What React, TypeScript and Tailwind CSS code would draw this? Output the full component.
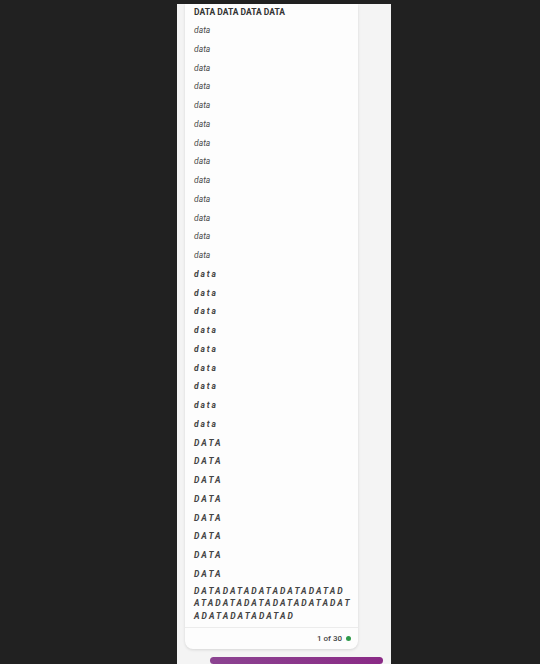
import React from 'react';

const plainRows = Array.from({ length: 13 }, (_, i) => i);
const spacedRows = Array.from({ length: 9 }, (_, i) => i);
const capsRows = Array.from({ length: 8 }, (_, i) => i);

export default function App() {
  return (
    <div
      className="h-[664px] w-[540px] overflow-hidden bg-[#212121]"
      style={{ fontFamily: 'Roboto, "Liberation Sans", sans-serif' }}
    >
      <div className="ml-[177px] mt-[4px] flex h-[660px] w-[214px] flex-col bg-[#f4f4f4]">
        {/* Message card */}
        <div className="ml-[8px] w-[173px] rounded-b-[8px] bg-[#fdfdfd] shadow-[0_1px_3px_rgba(0,0,0,0.12)]">
          <div className="px-[9px]">
            <div className="flex h-[17px] items-center text-[8.5px] font-bold text-[#333]">
              DATA DATA DATA DATA
            </div>

            {plainRows.map((i) => (
              <div key={`p${i}`} className="flex h-[18.75px] items-center text-[8.5px] italic text-[#4a4a4a]">
                data
              </div>
            ))}

            {spacedRows.map((i) => (
              <div
                key={`s${i}`}
                className="flex h-[18.75px] items-center text-[8.5px] font-bold italic tracking-[0.22em] text-[#444]"
              >
                data
              </div>
            ))}

            {capsRows.map((i) => (
              <div
                key={`c${i}`}
                className="flex h-[18.75px] items-center text-[8.5px] font-bold italic tracking-[0.24em] text-[#444]"
              >
                DATA
              </div>
            ))}

            <div className="mt-[1px] pb-[5px] text-[8.5px] font-bold italic leading-[12.5px] tracking-[0.24em] text-[#444]">
              <span className="block">DATADATADATADATADATAD</span>
              <span className="block">ATADATADATADATADATADAT</span>
              <span className="block">ADATADATADATAD</span>
            </div>
          </div>

          {/* Footer */}
          <div className="flex h-[22px] items-center justify-end gap-[4px] border-t border-[#ececec] pr-[7px]">
            <span className="text-[8px] font-medium text-[#444]">1 of 30</span>
            <span className="h-[5px] w-[5px] rounded-full bg-[#2e9a4a]" />
          </div>
        </div>

        {/* Action button */}
        <div className="ml-[33px] mt-[8px] h-[40px] w-[173px] rounded-[8px] bg-gradient-to-r from-[#8b4391] to-[#8a2a86]" />
      </div>
    </div>
  );
}
